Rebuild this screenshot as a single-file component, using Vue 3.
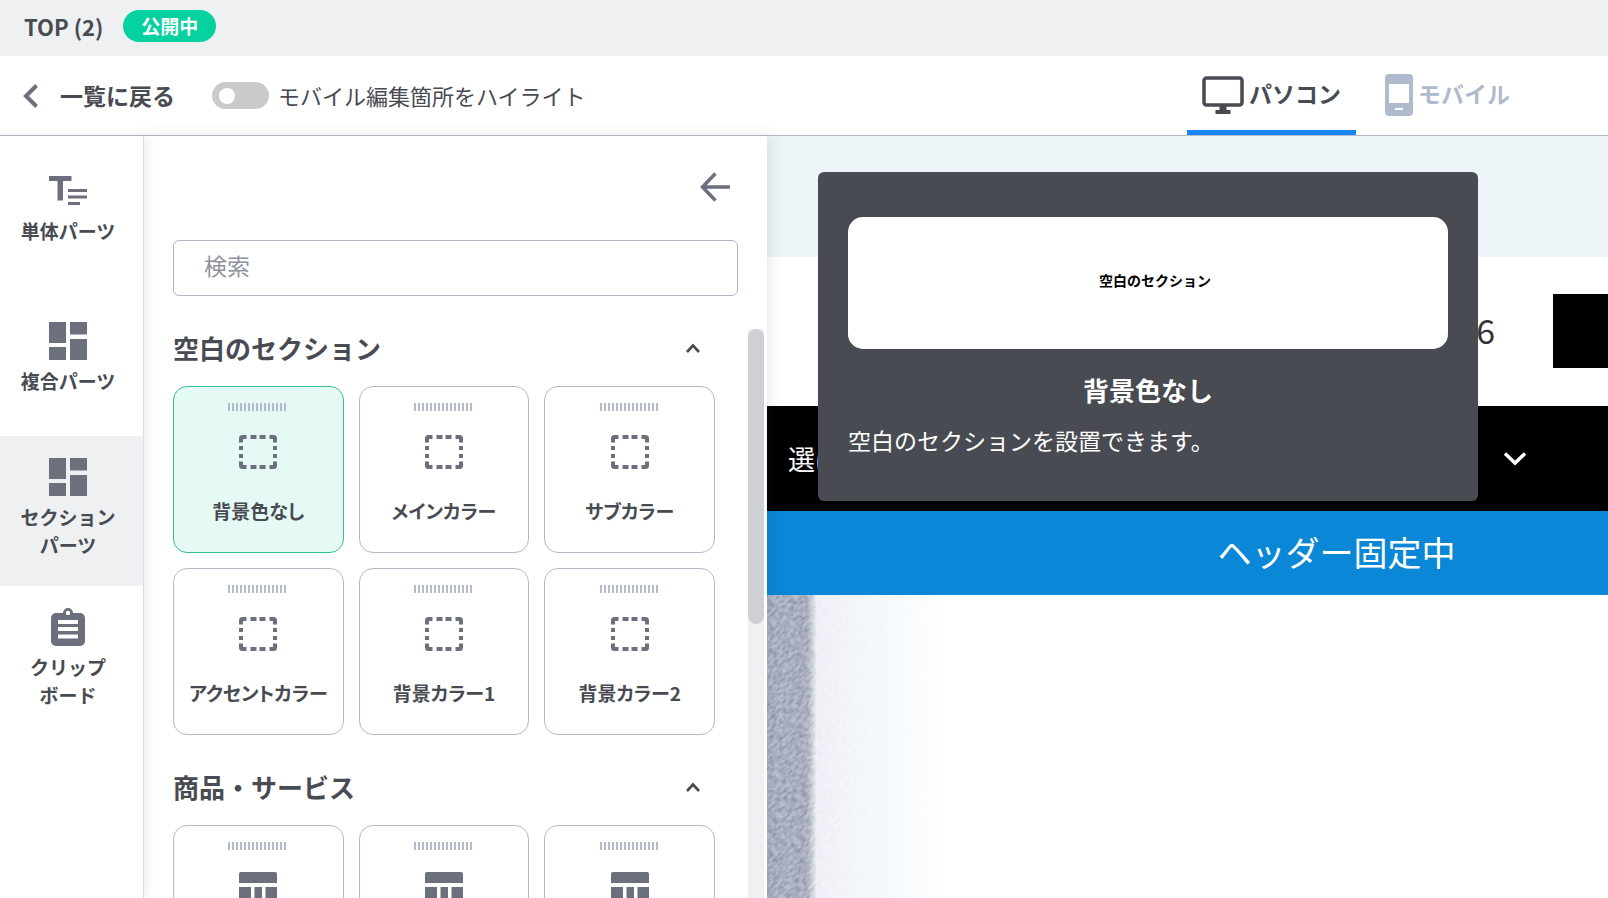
<script setup>
import { ref } from 'vue'

const highlight = ref(false)
const keyword = ref('')
const device = ref('pc')
const activePart = ref('section')
const selected = ref('背景色なし')

const parts = [
  { id: 'single', icon: 'text', lines: ['単体パーツ'] },
  { id: 'compound', icon: 'blocks', lines: ['複合パーツ'] },
  { id: 'section', icon: 'blocks', lines: ['セクション', 'パーツ'] },
  { id: 'clipboard', icon: 'clipboard', lines: ['クリップ', 'ボード'] },
]

const groups = ref([
  {
    title: '空白のセクション',
    icon: 'dashed',
    labelled: true,
    open: true,
    items: ['背景色なし', 'メインカラー', 'サブカラー', 'アクセントカラー', '背景カラー1', '背景カラー2'],
  },
  {
    title: '商品・サービス',
    icon: 'table',
    labelled: false,
    open: true,
    items: ['商品・サービス 1', '商品・サービス 2', '商品・サービス 3'],
  },
])
</script>

<template>
  <div class="editor">
    <header class="titlebar">
      <h1 class="page-name">TOP (2)</h1>
      <span class="badge">公開中</span>
    </header>

    <div class="toolbar">
      <a class="back" href="#">
        <svg width="16" height="24" viewBox="0 0 16 24"><path d="M13.5 1.5L3 12l10.500 10.500" fill="none" stroke="#6b707c" stroke-width="4" /></svg>
        <span>一覧に戻る</span>
      </a>
      <label class="toggle">
        <input v-model="highlight" type="checkbox" />
        <span>モバイル編集箇所をハイライト</span>
      </label>
      <nav class="devices">
        <button class="device" :class="{ on: device === 'pc' }" type="button" @click="device = 'pc'">
          <svg width="42" height="38" viewBox="0 0 42 38"><rect x="2" y="2" width="38" height="27" rx="2.500" fill="none" stroke="currentColor" stroke-width="3.500" /><path d="M17.500 30h7v4h4v4h-15v-4h4z" fill="currentColor" /></svg>
          パソコン
        </button>
        <button class="device" :class="{ on: device === 'sp' }" type="button" @click="device = 'sp'">
          <svg width="28" height="42" viewBox="0 0 28 42"><path fill-rule="evenodd" d="M4 0h20a4 4 0 0 1 4 4v34a4 4 0 0 1-4 4H4a4 4 0 0 1-4-4V4a4 4 0 0 1 4-4zM4 10v19h20V10zM10 34v2h8v-2z" fill="currentColor" /></svg>
          モバイル
        </button>
      </nav>
    </div>

    <div class="workspace">
      <nav class="parts">
        <button
          v-for="part in parts"
          :key="part.id"
          class="part"
          :class="{ active: part.id === activePart }"
          type="button"
          @click="activePart = part.id"
        >
          <svg width="38" height="38" viewBox="0 0 38 38" fill="#6b707c">
            <path v-if="part.icon === 'text'" d="M0 4h22.500v5H14v19.500H8.500V9H0zM19 17h19v3H19zM19 23.500h19v3H19zM19 30h12v3H19z" />
            <path v-else-if="part.icon === 'blocks'" d="M0 0h17v21H0zM0 25h17v13H0zM21 0h17v12.500H21zM21 17h17v21H21z" />
            <path v-else fill-rule="evenodd" d="M7 5h7a5 5 0 0 1 10 0h7a5 5 0 0 1 5 5v23a5 5 0 0 1-5 5H7a5 5 0 0 1-5-5V10a5 5 0 0 1 5-5zM19 2.700a2.200 2.200 0 1 0 0 4.400a2.200 2.200 0 1 0 0-4.400zM9 12v4h20v-4zM9 19v4h20v-4zM9 26.500v4h20v-4z" />
          </svg>
          <span class="part-label"><span v-for="line in part.lines" :key="line">{{ line }}</span></span>
        </button>
      </nav>

      <aside class="library">
        <button class="collapse" type="button" aria-label="閉じる">
          <svg width="30" height="30" viewBox="0 0 30 30"><path d="M15.500 1.500L2.500 15l13 13.500M3 15h27" fill="none" stroke="#6b707c" stroke-width="3.500" /></svg>
        </button>
        <input v-model="keyword" class="search" type="search" placeholder="検索" aria-label="検索" />

        <div class="scroller">
          <div class="groups">
            <section v-for="group in groups" :key="group.title" class="group">
              <h2 class="group-title">
                <button type="button" :aria-expanded="group.open" @click="group.open = !group.open">
                  {{ group.title }}
                  <svg width="16" height="12" viewBox="0 0 16 12"><path d="M2 10l6-6.500 6 6.500" fill="none" stroke="#484b52" stroke-width="2.600" /></svg>
                </button>
              </h2>
              <div v-if="group.open" class="cards">
                <button
                  v-for="item in group.items"
                  :key="item"
                  class="card"
                  :class="{ selected: item === selected }"
                  type="button"
                  :aria-label="item"
                  @click="selected = item"
                >
                  <span class="grip"></span>
                  <svg width="38" height="38" viewBox="0 0 38 38" fill="#6b707c">
                    <path v-if="group.icon === 'dashed'" d="M3.500 2H7.500V6H4V9.500H0V5.500A3.500 3.500 0 0 1 3.500 2zM11.500 2h6v4h-6zM20.500 2h6v4h-6zM30.500 2h4A3.500 3.500 0 0 1 38 5.500v4h-4V6h-3.500zM0 13h4v4H0zM0 21h4v4H0zM34 13h4v4h-4zM34 21h4v4h-4zM0 28.500h4V32h3.500v4h-4A3.500 3.500 0 0 1 0 32.500zM11.500 32h6v4h-6zM20.500 32h6v4h-6zM34 28.500h4v4a3.500 3.500 0 0 1-3.500 3.500h-4v-4H34z" />
                    <path v-else d="M2 0h34a2 2 0 0 1 2 2v9H0V2a2 2 0 0 1 2-2zM0 15h12v23H2a2 2 0 0 1-2-2zM15.500 15h7.500v23h-7.500zM26.500 15H38v21a2 2 0 0 1-2 2h-9.500z" />
                  </svg>
                  <span v-if="group.labelled" class="card-label">{{ item }}</span>
                </button>
              </div>
            </section>
          </div>
          <div class="track"><div class="thumb"></div></div>
        </div>
      </aside>

      <main class="preview">
        <div class="strip"></div>
        <div class="site-head">
          <span class="tel">6</span>
          <span class="contact"></span>
        </div>
        <div class="site-nav">
          <span>選ば</span>
          <svg width="24" height="16" viewBox="0 0 24 16"><path d="M2 2.500l10 9.500 10-9.500" fill="none" stroke="#fff" stroke-width="3.500" /></svg>
        </div>
        <div class="fixed-bar">ヘッダー固定中</div>
        <div class="photo">
          <svg class="fabric" width="180" height="100%">
            <defs>
              <filter id="weave" x="0" y="0" width="1" height="1" color-interpolation-filters="sRGB">
                <feTurbulence type="fractalNoise" baseFrequency="0.18 0.36" numOctaves="2" seed="4" />
                <feColorMatrix values="0 0 0 0 0.48  0 0 0 0 0.51  0 0 0 0 0.6  1.500 0 0 0 -0.500" />
              </filter>
              <linearGradient id="shade">
                <stop offset="0" stop-color="#bcc1ce" />
                <stop offset="0.200" stop-color="#b8bccb" />
                <stop offset="0.220" stop-color="#b8bccc" />
                <stop offset="0.275" stop-color="#f0f2f8" />
                <stop offset="0.500" stop-color="#f5f8fb" />
                <stop offset="0.800" stop-color="#f9fcfd" />
                <stop offset="1" stop-color="#ffffff" />
              </linearGradient>
              <linearGradient id="fade">
                <stop offset="0" stop-color="#fff" />
                <stop offset="0.220" stop-color="#fff" />
                <stop offset="0.275" stop-color="#fff" stop-opacity="0.080" />
                <stop offset="0.900" stop-color="#fff" stop-opacity="0" />
              </linearGradient>
              <mask id="edge" maskUnits="userSpaceOnUse" x="0" y="0" width="180" height="900"><rect width="180" height="900" fill="url(#fade)" /></mask>
            </defs>
            <rect width="180" height="100%" fill="url(#shade)" />
            <g mask="url(#edge)"><rect x="-400" y="-200" width="800" height="900" transform="rotate(-45)" filter="url(#weave)" /></g>
          </svg>
        </div>

        <div class="tip" role="tooltip">
          <div class="sample">空白のセクション</div>
          <h3 class="tip-title">背景色なし</h3>
          <p class="tip-text">空白のセクションを設置できます。</p>
        </div>
      </main>
    </div>
  </div>
</template>

<style>
body {
  overflow: hidden;
}
</style>

<style scoped>
.editor,
.editor * {
  box-sizing: border-box;
}
.editor {
  display: flex;
  flex-direction: column;
  height: 100vh;
  background: #fff;
  color: #484b52;
  font-family: "Noto Sans CJK JP", sans-serif;
  font-size: 22px;
  line-height: 28px;
}
button {
  padding: 0;
  border: 0;
  background: none;
  color: inherit;
  font: inherit;
  cursor: pointer;
}
svg {
  flex: none;
  display: block;
}
h1,
h2,
h3,
p {
  margin: 0;
}

.titlebar {
  flex: none;
  display: flex;
  align-items: center;
  gap: 20px;
  height: 56px;
  padding: 0 24px 4px;
  background: #eff0f2;
}
.page-name {
  font-size: 22px;
  font-weight: 700;
}
.badge {
  padding: 2px 18px;
  border-radius: 16px;
  background: #05d1a1;
  color: #fff;
  font-size: 19px;
  font-weight: 700;
}

.toolbar {
  flex: none;
  display: flex;
  align-items: center;
  height: 80px;
  padding-left: 23px;
  border-bottom: 1px solid #b4bac6;
}
.back {
  display: flex;
  align-items: center;
  gap: 21px;
  color: inherit;
  font-size: 23px;
  font-weight: 700;
  text-decoration: none;
}
.toggle {
  display: flex;
  align-items: center;
  gap: 9px;
  margin-left: 37px;
}
.back span,
.toggle span {
  padding-bottom: 2px;
}
.toggle input {
  appearance: none;
  display: flex;
  align-items: center;
  width: 57px;
  height: 27px;
  margin: 0;
  padding: 0 7px;
  border-radius: 14px;
  background: #cacaca;
}
.toggle input::before {
  content: "";
  width: 16px;
  height: 16px;
  border-radius: 50%;
  background: #fff;
}
.toggle input:checked {
  justify-content: flex-end;
  background: #05d1a1;
}
.devices {
  align-self: stretch;
  display: flex;
  gap: 14px;
  margin-left: auto;
  padding-right: 83px;
}
.device {
  display: flex;
  align-items: center;
  gap: 5px;
  padding: 0 15px;
  border-bottom: 5px solid transparent;
  color: #b0bacd;
  font-size: 23px;
  font-weight: 700;
}
.device svg {
  margin-top: 4px;
}
.device.on {
  border-color: #1787f8;
  color: #484b52;
}

.workspace {
  flex: 1;
  display: flex;
  min-height: 0;
}
.parts {
  z-index: 2;
  flex: none;
  width: 144px;
  border-right: 1px solid #dcdde1;
  background: #fff;
  box-shadow: 2px 0 10px rgba(60, 64, 80, 0.1);
}
.part {
  display: flex;
  flex-direction: column;
  align-items: center;
  justify-content: center;
  gap: 7px;
  width: 100%;
  height: 150px;
  padding: 0 7px 6px 0;
  font-size: 19px;
  font-weight: 700;
}
.part.active {
  background: #eff0f2;
}
.part-label span {
  display: block;
}

.library {
  z-index: 1;
  flex: none;
  display: flex;
  flex-direction: column;
  width: 623px;
  padding: 36px 3px 0 29px;
  background: #fff;
  box-shadow: 2px 0 14px rgba(60, 64, 80, 0.12);
}
.collapse {
  align-self: flex-end;
  margin-right: 34px;
}
.search {
  flex: none;
  appearance: none;
  width: 565px;
  height: 56px;
  margin: 38px 0 33px;
  padding: 0 30px 7px;
  border: 1px solid #b0b8c8;
  border-radius: 6px;
  outline: 0;
  color: inherit;
  font: inherit;
  font-size: 23px;
}
.search::placeholder {
  color: #8f939d;
  opacity: 1;
}
.scroller {
  flex: 1;
  display: flex;
  justify-content: space-between;
  min-height: 0;
  overflow: hidden;
}
.groups {
  width: 542px;
}
.group {
  margin-bottom: 33px;
}
.group-title {
  margin-bottom: 19px;
  font-size: 26px;
  line-height: 38px;
}
.group-title button {
  display: flex;
  align-items: center;
  justify-content: space-between;
  width: 100%;
  padding-right: 14px;
  font-weight: 700;
}
.cards {
  display: grid;
  grid-template-columns: repeat(3, 1fr);
  gap: 15px;
}
.card {
  display: flex;
  flex-direction: column;
  align-items: center;
  height: 167px;
  padding-top: 16px;
  border: 1px solid #b4bac8;
  border-radius: 14px;
  font-size: 19px;
  font-weight: 700;
  font-feature-settings: "palt";
}
.card.selected {
  border-color: #35bf98;
  background: #e5faf5;
}
.grip {
  width: 60px;
  height: 8px;
  margin-bottom: 22px;
  background: repeating-linear-gradient(90deg, #b4bccb 0 2px, transparent 2px 4px);
}
.card-label {
  margin-top: 26px;
  white-space: nowrap;
}
.track {
  width: 16px;
  background: #eff0f2;
}
.thumb {
  height: 295px;
  border-radius: 8px;
  background: #cfd0d5;
}

.preview {
  position: relative;
  flex: 1;
  display: flex;
  flex-direction: column;
  min-width: 0;
  overflow: hidden;
}
.strip {
  flex: none;
  height: 121px;
  background: #ecf4f7;
}
.site-head {
  flex: none;
  display: flex;
  align-items: center;
  justify-content: flex-end;
  gap: 58px;
  height: 149px;
  padding-bottom: 2px;
  color: #333;
}
.tel {
  padding-bottom: 2px;
  font-size: 34px;
}
.contact {
  width: 55px;
  height: 74px;
  background: #000;
}
.site-nav {
  flex: none;
  display: flex;
  align-items: center;
  justify-content: space-between;
  height: 105px;
  padding: 0 81px 0 21px;
  background: #000;
  color: #fff;
  font-size: 27px;
}
.fixed-bar {
  flex: none;
  height: 84px;
  padding-left: 298px;
  background: #0a87d6;
  color: #fff;
  font-size: 34px;
  line-height: 82px;
  text-align: center;
}
.photo {
  flex: 1;
  min-height: 0;
}
.fabric {
  height: 100%;
}
.tip {
  position: absolute;
  top: 36px;
  left: 51px;
  width: 660px;
  padding: 45px 30px 49px;
  border-radius: 6px;
  background: #484b52;
  color: #fff;
}
.sample {
  height: 132px;
  padding-left: 14px;
  border-radius: 15px;
  background: #fff;
  color: #000;
  font-size: 14px;
  font-weight: 700;
  line-height: 126px;
  text-align: center;
}
.tip-title {
  margin: 21px 0 18px;
  font-size: 26px;
  font-weight: 700;
  line-height: 40px;
  text-align: center;
}
.tip-text {
  font-size: 23px;
  line-height: 24px;
}
</style>
